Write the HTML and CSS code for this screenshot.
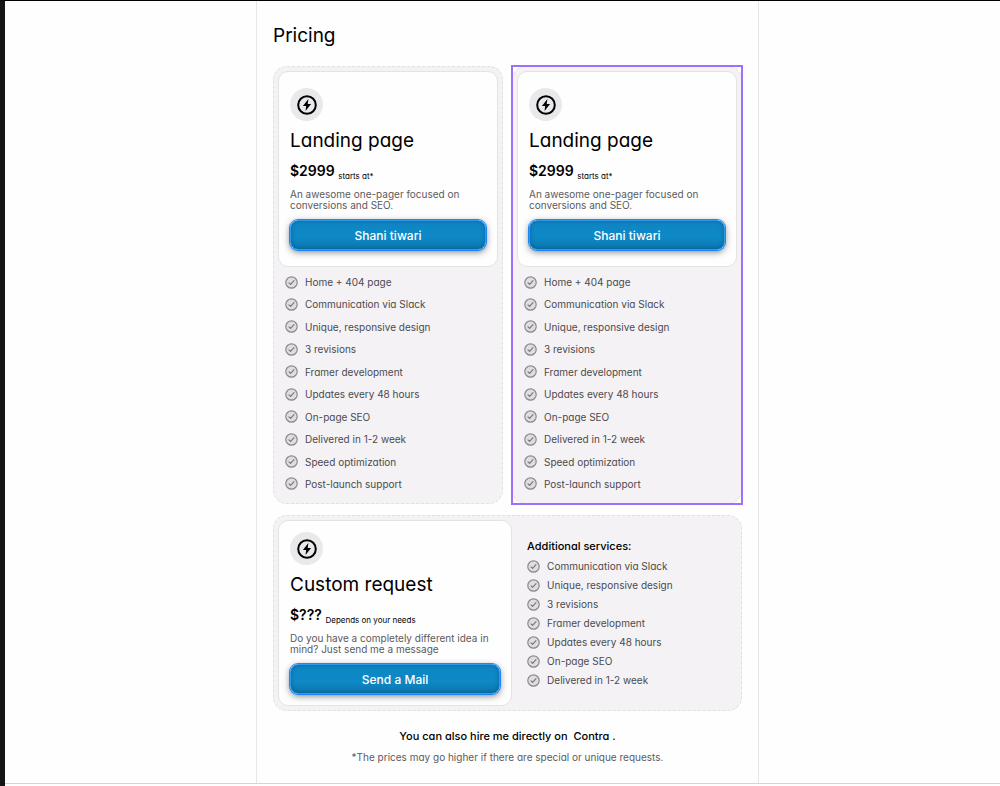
FILE: index.html
```html
<!DOCTYPE html>
<html lang="en">
<head>
  <meta charset="UTF-8">
  <title>Pricing</title>
  <link rel="stylesheet" href="styles.css">
</head>
<body>
  <!-- Shared icons -->
  <svg class="sprite" aria-hidden="true">
    <symbol id="bolt" viewBox="0 0 20 20">
      <circle cx="10" cy="10" r="8.8" fill="none" stroke="#000" stroke-width="2"/>
      <path d="M11.4 4 5.9 11h3.3l-.7 5L14.1 9h-3.4z" fill="#000"/>
    </symbol>
    <symbol id="check" viewBox="0 0 13 13">
      <circle cx="6.5" cy="6.5" r="5.7" fill="#dfdedf" stroke="#8c8a8c" stroke-width="1.2"/>
      <path d="M4 6.9 5.6 8.4 9 4.6" fill="none" stroke="#777577" stroke-width="1.1" stroke-linecap="round" stroke-linejoin="round"/>
    </symbol>
  </svg>

  <div class="page">
    <main class="pricing">
      <h1>Pricing</h1>

      <div class="plans">
        <section class="card">
          <div class="panel">
            <div class="icon"><svg><use href="#bolt"/></svg></div>
            <h2>Landing page</h2>
            <p class="price">$2999 <small>starts at*</small></p>
            <p class="description">An awesome one-pager focused on conversions and SEO.</p>
            <button class="button">Shani tiwari</button>
          </div>
          <ul class="features">
            <li><svg><use href="#check"/></svg>Home + 404 page</li>
            <li><svg><use href="#check"/></svg>Communication via Slack</li>
            <li><svg><use href="#check"/></svg>Unique, responsive design</li>
            <li><svg><use href="#check"/></svg>3 revisions</li>
            <li><svg><use href="#check"/></svg>Framer development</li>
            <li><svg><use href="#check"/></svg>Updates every 48 hours</li>
            <li><svg><use href="#check"/></svg>On-page SEO</li>
            <li><svg><use href="#check"/></svg>Delivered in 1-2 week</li>
            <li><svg><use href="#check"/></svg>Speed optimization</li>
            <li><svg><use href="#check"/></svg>Post-launch support</li>
          </ul>
        </section>

        <section class="card selected">
          <div class="panel">
            <div class="icon"><svg><use href="#bolt"/></svg></div>
            <h2>Landing page</h2>
            <p class="price">$2999 <small>starts at*</small></p>
            <p class="description">An awesome one-pager focused on conversions and SEO.</p>
            <button class="button">Shani tiwari</button>
          </div>
          <ul class="features">
            <li><svg><use href="#check"/></svg>Home + 404 page</li>
            <li><svg><use href="#check"/></svg>Communication via Slack</li>
            <li><svg><use href="#check"/></svg>Unique, responsive design</li>
            <li><svg><use href="#check"/></svg>3 revisions</li>
            <li><svg><use href="#check"/></svg>Framer development</li>
            <li><svg><use href="#check"/></svg>Updates every 48 hours</li>
            <li><svg><use href="#check"/></svg>On-page SEO</li>
            <li><svg><use href="#check"/></svg>Delivered in 1-2 week</li>
            <li><svg><use href="#check"/></svg>Speed optimization</li>
            <li><svg><use href="#check"/></svg>Post-launch support</li>
          </ul>
        </section>
      </div>

      <!-- Custom request -->
      <section class="card custom">
        <div class="panel">
          <div class="icon"><svg><use href="#bolt"/></svg></div>
          <h2>Custom request</h2>
          <p class="price">$??? <small>Depends on your needs</small></p>
          <p class="description">Do you have a completely different idea in mind? Just send me a message</p>
          <button class="button">Send a Mail</button>
        </div>
        <div class="services">
          <h3>Additional services:</h3>
          <ul class="service-list">
            <li><svg><use href="#check"/></svg>Communication via Slack</li>
            <li><svg><use href="#check"/></svg>Unique, responsive design</li>
            <li><svg><use href="#check"/></svg>3 revisions</li>
            <li><svg><use href="#check"/></svg>Framer development</li>
            <li><svg><use href="#check"/></svg>Updates every 48 hours</li>
            <li><svg><use href="#check"/></svg>On-page SEO</li>
            <li><svg><use href="#check"/></svg>Delivered in 1-2 week</li>
          </ul>
        </div>
      </section>

      <p class="hire">You can also hire me directly on &nbsp;<a href="#">Contra</a> .</p>
      <p class="note">*The prices may go higher if there are special or unique requests.</p>
    </main>
  </div>
</body>
</html>
```

FILE: styles.css
```css
/* Base styles */
* {
  box-sizing: border-box;
}

body {
  margin: 0;
  font-family: Inter, "Liberation Sans", sans-serif;
  font-feature-settings: "cv11";
  background-color: #fefefe;
  color: #000;
  border-top: 1px solid #000;
  border-left: 5px solid #161415;
  min-height: 100vh;
}

h1, h2, h3, p, ul {
  margin: 0;
  padding: 0;
  font-weight: normal;
}

ul {
  list-style: none;
}

.sprite {
  display: none;
}

.page {
  padding-left: 10px;
  border-bottom: 1px solid #d6d5d6;
}

/* Center column */
.pricing {
  max-width: 503px;
  margin: 0 auto;
  padding: 21px 16px 19px;
  border-left: 1px solid #e8e7e8;
  border-right: 1px solid #e8e7e8;
}

h1 {
  font-size: 19px;
  line-height: 28px;
  margin-bottom: 16px;
}

.plans {
  display: grid;
  grid-template-columns: 1fr 1fr;
  gap: 9px;
  margin-bottom: 11px;
}

/* Cards */
.card {
  display: flex;
  flex-direction: column;
  padding: 4px;
  background-color: #f4f2f5;
  border: 1px dashed #e2e0e3;
  border-radius: 14px;
}

.plans .card {
  min-height: 438px;
}

.selected {
  position: relative;
}

.selected::after {
  content: "";
  position: absolute;
  inset: -2px;
  border: 2px solid #9d70fa;
  pointer-events: none;
}

.panel {
  padding: 16px 11px;
  background-color: #fefefe;
  border: 1px solid #e3e2e4;
  border-radius: 10px;
}

.icon {
  display: flex;
  align-items: center;
  justify-content: center;
  width: 33px;
  height: 33px;
  border-radius: 50%;
  background-color: #e9e8ea;
}

.icon svg {
  width: 20px;
  height: 20px;
}

h2 {
  font-size: 19px;
  line-height: 24px;
  margin-top: 8px;
}

.price {
  font-size: 14px;
  font-weight: 600;
  line-height: 18px;
  margin-top: 9px;
}

.price small {
  display: inline-block;
  font-size: 8px;
  font-weight: 400;
  line-height: 8px;
  vertical-align: -3px;
}

.description {
  font-size: 10px;
  line-height: 11px;
  margin-top: 9px;
  color: #5c5a5c;
  font-feature-settings: normal;
}

.button {
  display: block;
  width: 100%;
  height: 30px;
  margin-top: 9px;
  padding: 0;
  border: 1px solid #2f9ae8;
  border-radius: 8px;
  background: linear-gradient(#0f86c4, #0e88c6 60%, #0b76ab);
  box-shadow: 0 0 0 1px #1a85ff, 0 2px 7px rgba(0, 0, 0, 0.5), inset 0 0 4px rgba(0, 50, 90, 0.4);
  color: #fff;
  font-family: inherit;
  font-size: 12px;
  font-weight: 500;
  cursor: pointer;
}

/* Feature lists */
.features {
  flex: 1;
  display: flex;
  flex-direction: column;
  justify-content: space-between;
  padding: 8px 7px;
}

.features li,
.service-list li {
  display: flex;
  align-items: center;
  gap: 7px;
  font-size: 10px;
  line-height: 14px;
  color: #4c4a4d;
}

.features svg,
.service-list svg {
  width: 13px;
  height: 13px;
}

/* Custom request card */
.custom {
  flex-direction: row;
}

.custom .panel {
  width: 51%;
  padding: 11px;
}

.services {
  flex: 1;
  padding: 18px 15px;
}

h3 {
  font-size: 11px;
  font-weight: 500;
  line-height: 16px;
  margin-bottom: 5px;
}

.service-list {
  display: grid;
  gap: 5px;
}

/* Footer text */
.hire,
.note {
  text-align: center;
}

.hire {
  font-size: 11px;
  font-weight: 500;
  line-height: 16px;
  margin-top: 17px;
}

.hire a {
  color: inherit;
  text-decoration: none;
}

.note {
  font-size: 10px;
  line-height: 14px;
  margin-top: 6px;
  color: #5c5a5c;
}
```
